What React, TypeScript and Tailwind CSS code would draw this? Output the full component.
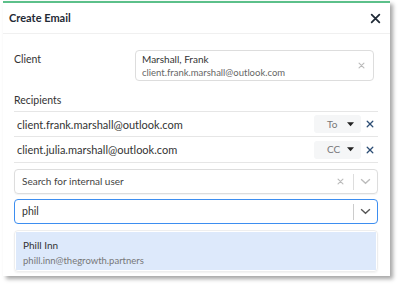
import React from 'react'

const font = { fontFamily: '"Segoe UI", Lato, "Noto Sans", sans-serif' }

function XIcon({ className = '' }: { className?: string }) {
    return (
        <svg viewBox="0 0 10 10" className={className} fill="none" stroke="currentColor" strokeWidth={1.6} strokeLinecap="round">
            <path d="M1.5 1.5 L8.5 8.5 M8.5 1.5 L1.5 8.5" />
        </svg>
    )
}

function Caret() {
    return (
        <svg viewBox="0 0 8 5" className="w-[7px] h-[5px]" fill="#222">
            <path d="M0 0 L8 0 L4 4.5 Z" />
        </svg>
    )
}

function Chevron({ color = '#999' }: { color?: string }) {
    return (
        <svg viewBox="0 0 12 8" className="w-[11px] h-[7px]" fill="none" stroke={color} strokeWidth={1.6}>
            <path d="M1 1.5 L6 6 L11 1.5" />
        </svg>
    )
}

function RecipientRow({ email, type, h }: { email: string; type: string; h: string }) {
    return (
        <div className={`flex items-center ${h} border-b border-[#e6e6e6] pl-[3px]`}>
            <span className="flex-1 text-[11px] text-[#333] pt-[2px]">{email}</span>
            <div className="flex items-center justify-between w-[47px] h-[18px] bg-[#f5f6f7] rounded-[3px] pl-[13px] pr-[7px]">
                <span className="text-[10px] text-[#777]">{type}</span>
                <Caret />
            </div>
            <div className="w-[17px] flex justify-center text-[#2d4e75]">
                <XIcon className="w-[8px] h-[8px]" />
            </div>
        </div>
    )
}

export default function App() {
    return (
        <div className="w-[398px] h-[284px] bg-white pt-[1px] pl-[3px]" style={font}>
            <div className="w-[387px] h-[275px] bg-white border-t-2 border-[#5cc08a] shadow-[3px_3px_4px_rgba(0,0,0,0.35)] flex flex-col">
                {/* Header */}
                <div className="h-[31px] flex items-center justify-between pl-[6px] pr-[9px] border-b border-[#f0f0f0]">
                    <span className="text-[11px] font-bold text-[#1f2a36]">Create Email</span>
                    <XIcon className="w-[11px] h-[11px] text-[#1f2a36]" />
                </div>

                <div className="flex flex-col pl-[11px] pr-[12px] pt-[16px]">
                    {/* Client */}
                    <div className="flex items-start">
                        <span className="w-[121px] text-[10.5px] leading-[14px] text-[#333] pt-[2px]">Client</span>
                        <div className="flex-1 h-[31px] mr-[4px] border border-[#ddd] rounded-[4px] flex items-center pl-[6px] pr-[8px]">
                            <div className="flex-1 flex flex-col leading-[13px] pt-[1px]">
                                <span className="text-[10px] text-[#333]">Marshall, Frank</span>
                                <span className="text-[9.5px] text-[#666]">client.frank.marshall@outlook.com</span>
                            </div>
                            <XIcon className="w-[7px] h-[7px] text-[#bbb]" />
                        </div>
                    </div>

                    {/* Recipients */}
                    <span className="text-[10.5px] leading-[14px] text-[#333] mt-[12px] mb-[4px]">Recipients</span>
                    <div className="border-t border-[#e6e6e6]">
                        <RecipientRow email="client.frank.marshall@outlook.com" type="To" h="h-[25px]" />
                        <RecipientRow email="client.julia.marshall@outlook.com" type="CC" h="h-[26px]" />
                    </div>

                    {/* Search */}
                    <div className="mt-[6px] h-[25px] border border-[#ddd] rounded-[4px] flex items-center pl-[7px] shadow-[0_1px_1px_rgba(0,0,0,0.05)]">
                        <span className="flex-1 text-[10px] text-[#444]">Search for internal user</span>
                        <XIcon className="w-[7px] h-[7px] text-[#bbb]" />
                        <div className="w-px h-[16px] bg-[#ddd] ml-[9px]" />
                        <div className="w-[23px] flex justify-center">
                            <Chevron color="#bbb" />
                        </div>
                    </div>

                    {/* Active input */}
                    <div className="mt-[5px] h-[25px] border border-[#3d8ef0] rounded-[4px] flex items-center pl-[7px]">
                        <span className="flex-1 text-[10.5px] text-[#333]">phil</span>
                        <div className="w-px h-[16px] bg-[#ccc]" />
                        <div className="w-[23px] flex justify-center">
                            <Chevron color="#555" />
                        </div>
                    </div>

                    {/* Menu */}
                    <div className="mt-[6px] h-[42px] border border-[#eee] rounded-[4px] p-[1px] shadow-[0_1px_2px_rgba(0,0,0,0.06)]">
                        <div className="h-full bg-[#dde9fb] flex flex-col justify-center pl-[7px] pt-[3px] leading-[16px]">
                            <span className="text-[10px] text-[#333]">Phill Inn</span>
                            <span className="text-[9.5px] text-[#777]">phill.inn@thegrowth.partners</span>
                        </div>
                    </div>
                </div>
            </div>
        </div>
    )
}
